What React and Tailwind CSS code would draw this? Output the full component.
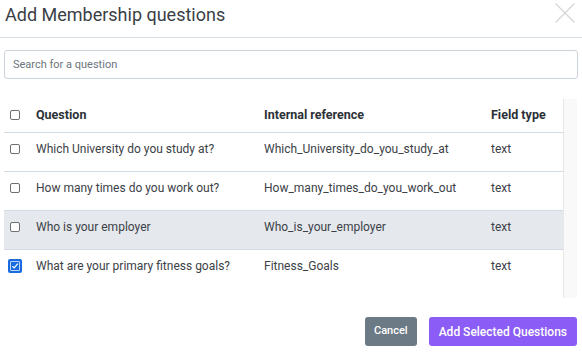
const rows = [
  { q: 'Which University do you study at?', ref: 'Which_University_do_you_study_at', type: 'text' },
  { q: 'How many times do you work out?', ref: 'How_many_times_do_you_work_out', type: 'text' },
  { q: 'Who is your employer', ref: 'Who_is_your_employer', type: 'text', hover: true },
  { q: 'What are your primary fitness goals?', ref: 'Fitness_Goals', type: 'text', checked: true },
];

function Checkbox({ checked }) {
  if (checked) {
    return (
      <div className="ml-[4px] w-[14px] h-[14px] rounded-[2px] bg-[#1a6be0] flex items-center justify-center">
        <div className="w-[10px] h-[10px] border border-white/70 rounded-[1px] flex items-center justify-center">
          <svg viewBox="0 0 10 10" className="w-[8px] h-[8px]">
            <path d="M1.5 5.2 L4 7.5 L8.5 2" fill="none" stroke="white" strokeWidth="1.5" />
          </svg>
        </div>
      </div>
    );
  }
  return <div className="ml-[6px] w-[10px] h-[10px] rounded-[2px] border border-[#6f6f6f] bg-white" />;
}

export default function App() {
  return (
    <div className="w-[582px] h-[352px] bg-white overflow-hidden text-[#3c4147]" style={{ fontFamily: 'Roboto, "Liberation Sans", sans-serif' }}>
      {/* Header */}
      <div className="flex items-start justify-between h-[38px] border-b border-[#d9dfe6] pl-[5px] pr-[7px]">
        <h2 className="text-[18px] leading-[30px] text-[#3a3f45]">Add Membership questions</h2>
        <svg viewBox="0 0 20 20" className="w-[20px] h-[20px] mt-[3px]">
          <path d="M0.5 0.5 L19.5 19.5 M19.5 0.5 L0.5 19.5" stroke="#d6d6d6" strokeWidth="1.3" fill="none" />
        </svg>
      </div>

      {/* Search */}
      <div className="px-[4px] pt-[12px]">
        <input
          type="text"
          placeholder="Search for a question"
          className="w-full h-[29px] border border-[#cdd3da] rounded-[3px] px-[8px] text-[11px] text-[#495057] placeholder-[#6c757d] outline-none"
        />
      </div>

      {/* Table */}
      <div className="flex ml-[4px] mr-[5px] mt-[20px] h-[199px]">
        <div className="flex-1 overflow-hidden">
          <div className="grid grid-cols-[32px_228px_227px_1fr] items-center h-[34px] pb-[1px] border-b border-[#d3dbe6] text-[12.5px] font-bold text-[#2c3137]">
            <Checkbox />
            <div>Question</div>
            <div>Internal reference</div>
            <div>Field type</div>
          </div>
          {rows.map((r, i) => (
            <div
              key={i}
              className={`grid grid-cols-[32px_228px_227px_1fr] items-center h-[39px] pb-[7px] text-[12px] ${i < rows.length - 1 ? 'border-b border-[#d3dbe6]' : ''} ${r.hover ? 'bg-[#e5e8ed]' : ''}`}
            >
              <Checkbox checked={r.checked} />
              <div>{r.q}</div>
              <div>{r.ref}</div>
              <div>{r.type}</div>
            </div>
          ))}
        </div>
        <div className="w-[14px] bg-[#f9f9f9] border-l border-[#e8e8e8]" />
      </div>

      {/* Footer */}
      <div className="flex justify-end gap-[12px] px-[5px] pt-[19px]">
        <button className="h-[29px] px-[9px] rounded-[3px] bg-[#6c7a86] text-white text-[11px] font-medium">Cancel</button>
        <button className="h-[29px] px-[10px] rounded-[3px] bg-[#8b5cf6] text-white text-[12px] font-medium">Add Selected Questions</button>
      </div>
    </div>
  );
}
